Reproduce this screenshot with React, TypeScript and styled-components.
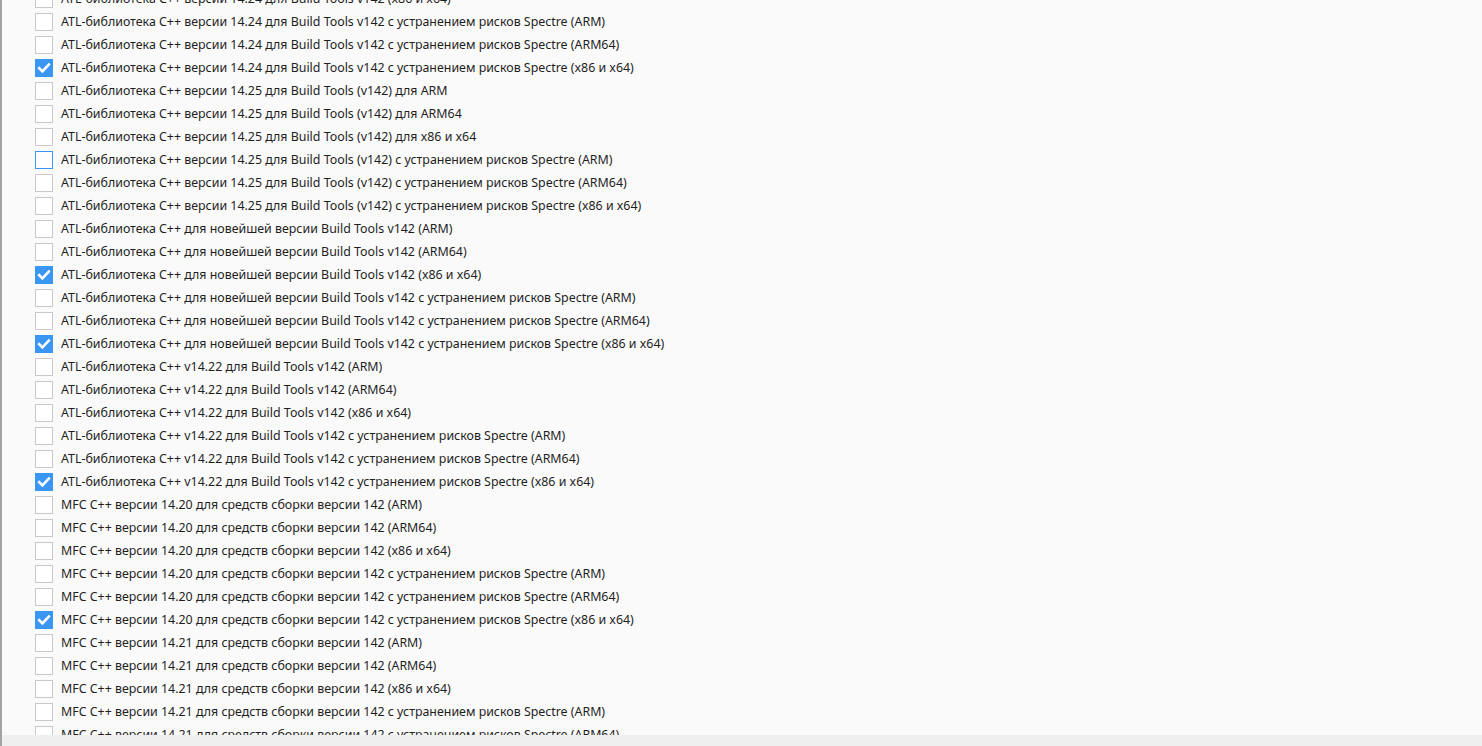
import React from "react";
import styled, { createGlobalStyle } from "styled-components";

const GlobalStyle = createGlobalStyle`
  html, body { margin: 0; padding: 0; width: 100%; height: 100%; overflow: hidden; }
  body { font-family: "Noto Sans", "Open Sans", sans-serif; }
`;

const Frame = styled.div`
  display: flex;
  width: 1482px;
  height: 746px;
  background: #fafafa;
`;

const LeftEdge = styled.div`
  width: 2px;
  flex: none;
  background: #a3a3a3;
`;

const Main = styled.div`
  flex: 1;
  display: flex;
  flex-direction: column;
  min-width: 0;
`;

const Viewport = styled.div`
  flex: 1;
  overflow: hidden;
  background: #fafafa;
`;

const List = styled.ul`
  list-style: none;
  margin: -13px 0 0 0;
  padding: 0 0 0 33px;
`;

const Row = styled.li`
  height: 23px;
  display: flex;
  align-items: center;
  gap: 8px;
`;

const Box = styled.span<{ $checked?: boolean; $focused?: boolean }>`
  width: 18px;
  height: 18px;
  box-sizing: border-box;
  flex: none;
  display: flex;
  align-items: center;
  justify-content: center;
  background: ${(p) => (p.$checked ? "#3a96f3" : "#ffffff")};
  border: 1px solid
    ${(p) => (p.$checked ? "#3a96f3" : p.$focused ? "#3a96f3" : "#c9c9c9")};
`;

const Label = styled.span`
  font-size: 12.4px;
  color: #1e1e1e;
  white-space: nowrap;
  line-height: 23px;
`;

const BottomBar = styled.div`
  height: 11px;
  flex: none;
  background: #efefef;
`;

type Item = { text: string; checked?: boolean; focused?: boolean };

const variants = (prefix: string, suffixes: string[], checkedIdx: number[] = []) =>
  suffixes.map((s, i) => ({ text: prefix + s, checked: checkedIdx.includes(i) }));

const spectre = ["(ARM)", "(ARM64)", "(x86 и x64)"];

const items: Item[] = [
  { text: "ATL-библиотека C++ версии 14.24 для Build Tools v142 (x86 и x64)" },
  ...variants(
    "ATL-библиотека C++ версии 14.24 для Build Tools v142 с устранением рисков Spectre ",
    spectre,
    [2]
  ),
  ...variants("ATL-библиотека C++ версии 14.25 для Build Tools (v142) для ", [
    "ARM",
    "ARM64",
    "x86 и x64",
  ]),
  ...variants(
    "ATL-библиотека C++ версии 14.25 для Build Tools (v142) с устранением рисков Spectre ",
    spectre
  ),
  ...variants("ATL-библиотека C++ для новейшей версии Build Tools v142 ", spectre, [2]),
  ...variants(
    "ATL-библиотека C++ для новейшей версии Build Tools v142 с устранением рисков Spectre ",
    spectre,
    [2]
  ),
  ...variants("ATL-библиотека C++ v14.22 для Build Tools v142 ", spectre),
  ...variants(
    "ATL-библиотека C++ v14.22 для Build Tools v142 с устранением рисков Spectre ",
    spectre,
    [2]
  ),
  ...variants("MFC C++ версии 14.20 для средств сборки версии 142 ", spectre),
  ...variants(
    "MFC C++ версии 14.20 для средств сборки версии 142 с устранением рисков Spectre ",
    spectre,
    [2]
  ),
  ...variants("MFC C++ версии 14.21 для средств сборки версии 142 ", spectre),
  ...variants(
    "MFC C++ версии 14.21 для средств сборки версии 142 с устранением рисков Spectre ",
    spectre
  ),
];

items[7].focused = true;

const Check = () => (
  <svg width="14" height="14" viewBox="0 0 14 14" aria-hidden="true">
    <path
      d="M2.2 7.2 L5.4 10.3 L11.8 3.6"
      fill="none"
      stroke="#ffffff"
      strokeWidth="2.6"
      strokeLinecap="square"
    />
  </svg>
);

export default function App() {
  return (
    <>
      <GlobalStyle />
      <Frame>
        <LeftEdge />
        <Main>
          <Viewport>
            <List>
              {items.map((it, i) => (
                <Row key={i}>
                  <Box $checked={it.checked} $focused={it.focused}>
                    {it.checked && <Check />}
                  </Box>
                  <Label>{it.text}</Label>
                </Row>
              ))}
            </List>
          </Viewport>
          <BottomBar />
        </Main>
      </Frame>
    </>
  );
}
